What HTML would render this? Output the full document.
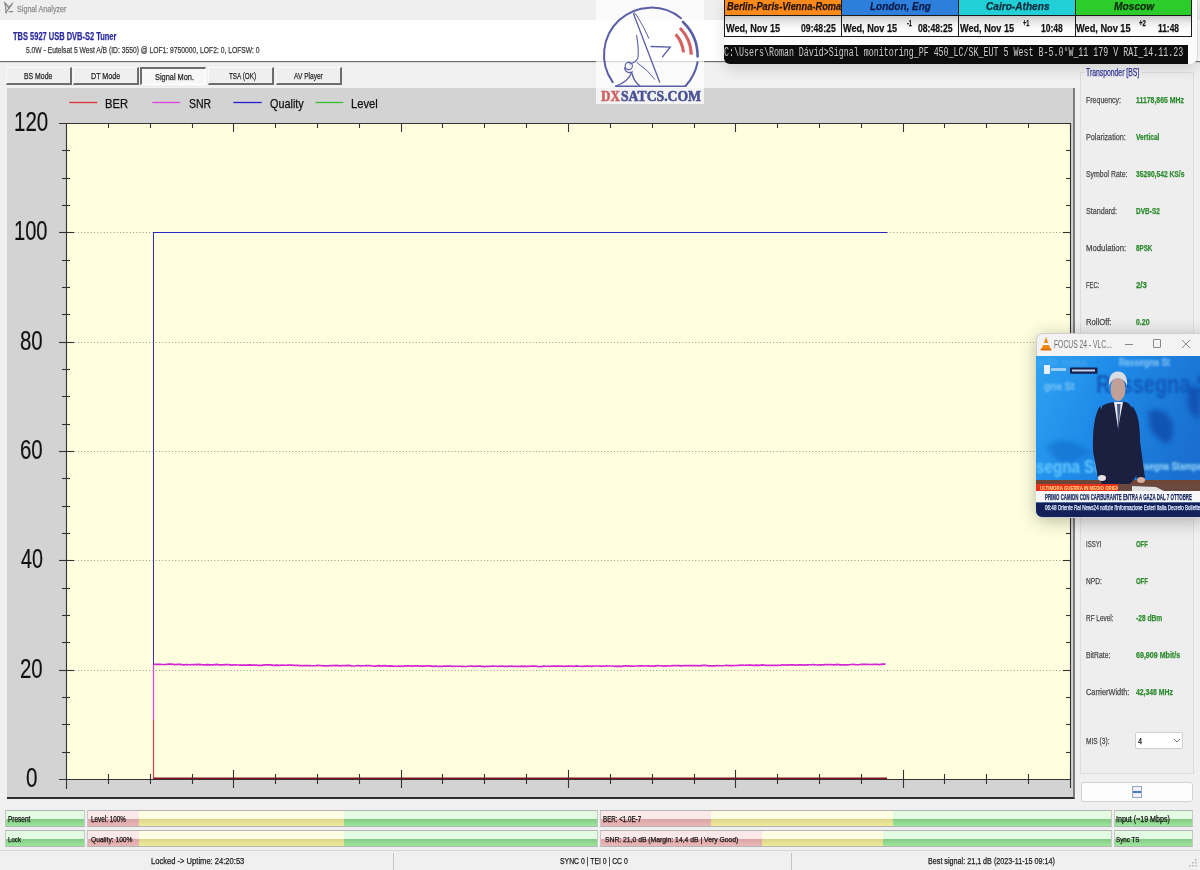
<!DOCTYPE html><html><head><meta charset="utf-8"><style>
*{margin:0;padding:0;box-sizing:border-box}
html,body{width:1200px;height:870px;overflow:hidden;background:#f0f0f0;font-family:"Liberation Sans",sans-serif}
body{position:relative}
.a{position:absolute}
.t{position:absolute;white-space:nowrap;line-height:1;transform-origin:0 0;-webkit-text-stroke:0.25px currentColor}
.btn{position:absolute;top:67px;height:18px;width:66px;background:#efefef;border-right:2px solid #6d6d6d;border-bottom:2px solid #6d6d6d;border-left:1px solid #fafafa;border-top:1px solid #fafafa}
.btn.on{background:#f7f7f7;border-left:2px solid #6d6d6d;border-top:2px solid #6d6d6d;border-right:1px solid #fff;border-bottom:1px solid #fff}
.bar{position:absolute;height:17px;border:1px solid #b4b4b4;border-left-color:#c8c8c8;border-right-color:#c8c8c8;overflow:hidden}
</style></head><body>
<div class="a" style="left:0;top:0;width:1200px;height:20px;background:#efefef"></div>
<svg class="a" style="left:0;top:0" width="16" height="16"><g stroke="#8a8a8a" stroke-width="1.3" fill="none" stroke-linecap="round"><path d="M4.5 2.5 L9.5 8"/><path d="M12.5 3.2 L6 12.5"/><path d="M5.2 3.5 L6.2 13"/><path d="M9.2 11.6 H12.6"/><path d="M8 7 L11.5 5.5"/></g></svg>
<div class="t" style="left:17.30px;top:4.10px;font-family:'Liberation Sans';font-size:9.875px;font-weight:normal;font-style:normal;color:#8a8a8a;transform:scaleX(0.7281);">Signal Analyzer</div>
<div class="a" style="left:0;top:20px;width:1200px;height:41px;background:#fff"></div>
<div class="a" style="left:0;top:61px;width:1200px;height:1px;background:#6e6e6e"></div>
<div class="a" style="left:0;top:62px;width:1200px;height:1px;background:#d8d8d8"></div>
<div class="t" style="left:13.00px;top:31.10px;font-family:'Liberation Sans';font-size:10.750px;font-weight:bold;font-style:normal;color:#2a2a9e;transform:scaleX(0.6963);">TBS 5927 USB DVB-S2 Tuner</div>
<div class="t" style="left:25.50px;top:45.10px;font-family:'Liberation Sans';font-size:9.625px;font-weight:normal;font-style:normal;color:#383838;transform:scaleX(0.7010);">5.0W - Eutelsat 5 West A/B (ID: 3550) @ LOF1: 9750000, LOF2: 0, LOFSW: 0</div>
<div class="btn" style="left:6px"></div>
<div class="t" style="left:24.30px;top:71.10px;font-family:'Liberation Sans';font-size:9.750px;font-weight:normal;font-style:normal;color:#1e1e1e;transform:scaleX(0.7056);">BS Mode</div>
<div class="btn" style="left:73px"></div>
<div class="t" style="left:91.30px;top:71.10px;font-family:'Liberation Sans';font-size:9.750px;font-weight:normal;font-style:normal;color:#1e1e1e;transform:scaleX(0.7310);">DT Mode</div>
<div class="btn on" style="left:140px"></div>
<div class="t" style="left:154.80px;top:72.10px;font-family:'Liberation Sans';font-size:9.625px;font-weight:normal;font-style:normal;color:#1e1e1e;transform:scaleX(0.7688);">Signal Mon.</div>
<div class="btn" style="left:208px"></div>
<div class="t" style="left:229.00px;top:71.10px;font-family:'Liberation Sans';font-size:9.875px;font-weight:normal;font-style:normal;color:#1e1e1e;transform:scaleX(0.6409);">TSA (OK)</div>
<div class="btn" style="left:276px"></div>
<div class="t" style="left:293.90px;top:71.10px;font-family:'Liberation Sans';font-size:9.875px;font-weight:normal;font-style:normal;color:#1e1e1e;transform:scaleX(0.6686);">AV Player</div>
<div class="a" style="left:7px;top:88px;width:1068px;height:711px;background:#d3d3d3;border-right:2px solid #7c7c7c;border-bottom:2px solid #2e2e2e"></div>
<svg class="a" style="left:0;top:0" width="1200" height="870"><rect x="66" y="123" width="1004" height="656" fill="#ffffe0"/><line x1="68" y1="232.5" x2="1068" y2="232.5" stroke="#9a9a8a" stroke-width="1" stroke-dasharray="1 2.25"/><line x1="68" y1="342.5" x2="1068" y2="342.5" stroke="#9a9a8a" stroke-width="1" stroke-dasharray="1 2.25"/><line x1="68" y1="451.5" x2="1068" y2="451.5" stroke="#9a9a8a" stroke-width="1" stroke-dasharray="1 2.25"/><line x1="68" y1="560.5" x2="1068" y2="560.5" stroke="#9a9a8a" stroke-width="1" stroke-dasharray="1 2.25"/><line x1="68" y1="670.5" x2="1068" y2="670.5" stroke="#9a9a8a" stroke-width="1" stroke-dasharray="1 2.25"/><line x1="153.5" y1="232" x2="153.5" y2="665" stroke="#3030c0" stroke-width="1"/><line x1="153.5" y1="232.5" x2="887" y2="232.5" stroke="#2828c8" stroke-width="1"/><line x1="153.5" y1="665" x2="153.5" y2="720" stroke="#e040e0" stroke-width="1.2"/><line x1="153.5" y1="720" x2="153.5" y2="779" stroke="#d04050" stroke-width="1.2"/><polyline points="153.5,664.24 156.5,664.43 159.5,664.34 162.5,664.49 165.5,664.52 168.5,664.20 171.5,664.18 174.5,664.69 177.5,664.36 180.5,664.36 183.5,664.83 186.5,664.53 189.5,664.77 192.5,664.57 195.5,664.69 198.5,664.42 201.5,664.72 204.5,664.88 207.5,664.70 210.5,664.85 213.5,664.83 216.5,664.48 219.5,664.92 222.5,664.84 225.5,664.69 228.5,664.55 231.5,665.07 234.5,664.85 237.5,665.02 240.5,665.14 243.5,665.06 246.5,665.21 249.5,664.92 252.5,665.18 255.5,664.99 258.5,665.31 261.5,665.30 264.5,664.85 267.5,664.89 270.5,664.97 273.5,665.44 276.5,665.14 279.5,665.28 282.5,665.11 285.5,665.25 288.5,665.20 291.5,665.20 294.5,665.36 297.5,665.39 300.5,665.60 303.5,665.49 306.5,665.66 309.5,665.64 312.5,665.74 315.5,665.57 318.5,665.28 321.5,665.72 324.5,665.81 327.5,665.79 330.5,665.61 333.5,665.72 336.5,665.44 339.5,665.83 342.5,665.70 345.5,665.54 348.5,665.43 351.5,665.92 354.5,666.02 357.5,665.50 360.5,665.95 363.5,665.73 366.5,665.59 369.5,665.70 372.5,666.00 375.5,666.08 378.5,665.60 381.5,665.96 384.5,665.63 387.5,666.05 390.5,665.84 393.5,666.18 396.5,666.26 399.5,665.99 402.5,666.30 405.5,665.90 408.5,665.77 411.5,666.10 414.5,665.78 417.5,665.89 420.5,666.03 423.5,666.16 426.5,665.90 429.5,665.84 432.5,666.35 435.5,666.03 438.5,666.43 441.5,666.40 444.5,666.10 447.5,666.16 450.5,666.20 453.5,666.29 456.5,666.27 459.5,666.25 462.5,666.30 465.5,666.50 468.5,666.24 471.5,666.21 474.5,666.39 477.5,666.10 480.5,666.15 483.5,666.56 486.5,666.29 489.5,666.31 492.5,665.99 495.5,666.24 498.5,666.34 501.5,666.00 504.5,666.36 507.5,666.38 510.5,666.03 513.5,666.38 516.5,666.28 519.5,666.41 522.5,666.21 525.5,666.42 528.5,666.44 531.5,666.01 534.5,666.03 537.5,666.40 540.5,666.57 543.5,666.14 546.5,666.26 549.5,666.34 552.5,666.17 555.5,666.19 558.5,666.15 561.5,666.18 564.5,666.31 567.5,666.13 570.5,666.17 573.5,666.40 576.5,665.94 579.5,666.26 582.5,666.35 585.5,666.09 588.5,666.03 591.5,666.37 594.5,666.02 597.5,665.98 600.5,666.12 603.5,666.26 606.5,665.90 609.5,666.02 612.5,666.01 615.5,666.30 618.5,666.05 621.5,666.29 624.5,665.86 627.5,665.95 630.5,666.12 633.5,666.25 636.5,665.98 639.5,665.83 642.5,665.75 645.5,665.98 648.5,665.76 651.5,666.11 654.5,666.11 657.5,665.71 660.5,665.75 663.5,666.05 666.5,665.93 669.5,666.01 672.5,665.72 675.5,665.57 678.5,665.65 681.5,665.93 684.5,665.60 687.5,665.62 690.5,665.65 693.5,665.63 696.5,665.60 699.5,665.89 702.5,665.41 705.5,665.30 708.5,665.84 711.5,665.78 714.5,665.83 717.5,665.48 720.5,665.76 723.5,665.73 726.5,665.28 729.5,665.58 732.5,665.61 735.5,665.48 738.5,665.38 741.5,665.22 744.5,665.23 747.5,665.14 750.5,665.02 753.5,665.31 756.5,665.10 759.5,665.40 762.5,664.91 765.5,665.41 768.5,665.26 771.5,665.38 774.5,665.34 777.5,665.32 780.5,665.10 783.5,664.74 786.5,665.16 789.5,664.79 792.5,664.85 795.5,665.04 798.5,664.94 801.5,664.85 804.5,665.14 807.5,664.92 810.5,664.74 813.5,664.66 816.5,665.01 819.5,664.76 822.5,664.92 825.5,664.64 828.5,664.53 831.5,664.71 834.5,664.86 837.5,664.45 840.5,664.81 843.5,664.87 846.5,664.78 849.5,664.77 852.5,664.26 855.5,664.62 858.5,664.74 861.5,664.24 864.5,664.35 867.5,664.34 870.5,664.48 873.5,664.40 876.5,664.42 879.5,664.59 882.5,664.11 885.5,664.14" fill="none" stroke="#d424d4" stroke-width="1.7"/><line x1="153.5" y1="778.5" x2="887" y2="778.5" stroke="#8a1020" stroke-width="2.2"/><path d="M59 123.5 H1070.5 V779.5 H59 M66.5 123 V789" fill="none" stroke="#333" stroke-width="1.1"/><line x1="62" y1="150.5" x2="70" y2="150.5" stroke="#333" stroke-width="1.1"/><line x1="1066" y1="150.5" x2="1070" y2="150.5" stroke="#333" stroke-width="1.1"/><line x1="62" y1="178.5" x2="70" y2="178.5" stroke="#333" stroke-width="1.1"/><line x1="1066" y1="178.5" x2="1070" y2="178.5" stroke="#333" stroke-width="1.1"/><line x1="62" y1="205.5" x2="70" y2="205.5" stroke="#333" stroke-width="1.1"/><line x1="1066" y1="205.5" x2="1070" y2="205.5" stroke="#333" stroke-width="1.1"/><line x1="59" y1="232.5" x2="74" y2="232.5" stroke="#333" stroke-width="1.1"/><line x1="1063" y1="232.5" x2="1070" y2="232.5" stroke="#333" stroke-width="1.1"/><line x1="62" y1="260.5" x2="70" y2="260.5" stroke="#333" stroke-width="1.1"/><line x1="1066" y1="260.5" x2="1070" y2="260.5" stroke="#333" stroke-width="1.1"/><line x1="62" y1="287.5" x2="70" y2="287.5" stroke="#333" stroke-width="1.1"/><line x1="1066" y1="287.5" x2="1070" y2="287.5" stroke="#333" stroke-width="1.1"/><line x1="62" y1="314.5" x2="70" y2="314.5" stroke="#333" stroke-width="1.1"/><line x1="1066" y1="314.5" x2="1070" y2="314.5" stroke="#333" stroke-width="1.1"/><line x1="59" y1="342.5" x2="74" y2="342.5" stroke="#333" stroke-width="1.1"/><line x1="1063" y1="342.5" x2="1070" y2="342.5" stroke="#333" stroke-width="1.1"/><line x1="62" y1="369.5" x2="70" y2="369.5" stroke="#333" stroke-width="1.1"/><line x1="1066" y1="369.5" x2="1070" y2="369.5" stroke="#333" stroke-width="1.1"/><line x1="62" y1="396.5" x2="70" y2="396.5" stroke="#333" stroke-width="1.1"/><line x1="1066" y1="396.5" x2="1070" y2="396.5" stroke="#333" stroke-width="1.1"/><line x1="62" y1="424.5" x2="70" y2="424.5" stroke="#333" stroke-width="1.1"/><line x1="1066" y1="424.5" x2="1070" y2="424.5" stroke="#333" stroke-width="1.1"/><line x1="59" y1="451.5" x2="74" y2="451.5" stroke="#333" stroke-width="1.1"/><line x1="1063" y1="451.5" x2="1070" y2="451.5" stroke="#333" stroke-width="1.1"/><line x1="62" y1="478.5" x2="70" y2="478.5" stroke="#333" stroke-width="1.1"/><line x1="1066" y1="478.5" x2="1070" y2="478.5" stroke="#333" stroke-width="1.1"/><line x1="62" y1="506.5" x2="70" y2="506.5" stroke="#333" stroke-width="1.1"/><line x1="1066" y1="506.5" x2="1070" y2="506.5" stroke="#333" stroke-width="1.1"/><line x1="62" y1="533.5" x2="70" y2="533.5" stroke="#333" stroke-width="1.1"/><line x1="1066" y1="533.5" x2="1070" y2="533.5" stroke="#333" stroke-width="1.1"/><line x1="59" y1="560.5" x2="74" y2="560.5" stroke="#333" stroke-width="1.1"/><line x1="1063" y1="560.5" x2="1070" y2="560.5" stroke="#333" stroke-width="1.1"/><line x1="62" y1="588.5" x2="70" y2="588.5" stroke="#333" stroke-width="1.1"/><line x1="1066" y1="588.5" x2="1070" y2="588.5" stroke="#333" stroke-width="1.1"/><line x1="62" y1="615.5" x2="70" y2="615.5" stroke="#333" stroke-width="1.1"/><line x1="1066" y1="615.5" x2="1070" y2="615.5" stroke="#333" stroke-width="1.1"/><line x1="62" y1="642.5" x2="70" y2="642.5" stroke="#333" stroke-width="1.1"/><line x1="1066" y1="642.5" x2="1070" y2="642.5" stroke="#333" stroke-width="1.1"/><line x1="59" y1="670.5" x2="74" y2="670.5" stroke="#333" stroke-width="1.1"/><line x1="1063" y1="670.5" x2="1070" y2="670.5" stroke="#333" stroke-width="1.1"/><line x1="62" y1="697.5" x2="70" y2="697.5" stroke="#333" stroke-width="1.1"/><line x1="1066" y1="697.5" x2="1070" y2="697.5" stroke="#333" stroke-width="1.1"/><line x1="62" y1="724.5" x2="70" y2="724.5" stroke="#333" stroke-width="1.1"/><line x1="1066" y1="724.5" x2="1070" y2="724.5" stroke="#333" stroke-width="1.1"/><line x1="62" y1="752.5" x2="70" y2="752.5" stroke="#333" stroke-width="1.1"/><line x1="1066" y1="752.5" x2="1070" y2="752.5" stroke="#333" stroke-width="1.1"/><line x1="108.5" y1="123" x2="108.5" y2="128" stroke="#333" stroke-width="1.1"/><line x1="108.5" y1="774" x2="108.5" y2="784" stroke="#333" stroke-width="1.1"/><line x1="150.5" y1="123" x2="150.5" y2="128" stroke="#333" stroke-width="1.1"/><line x1="150.5" y1="774" x2="150.5" y2="784" stroke="#333" stroke-width="1.1"/><line x1="192.5" y1="123" x2="192.5" y2="128" stroke="#333" stroke-width="1.1"/><line x1="192.5" y1="774" x2="192.5" y2="784" stroke="#333" stroke-width="1.1"/><line x1="233.5" y1="123" x2="233.5" y2="132" stroke="#333" stroke-width="1.1"/><line x1="233.5" y1="770" x2="233.5" y2="788" stroke="#333" stroke-width="1.1"/><line x1="275.5" y1="123" x2="275.5" y2="128" stroke="#333" stroke-width="1.1"/><line x1="275.5" y1="774" x2="275.5" y2="784" stroke="#333" stroke-width="1.1"/><line x1="317.5" y1="123" x2="317.5" y2="128" stroke="#333" stroke-width="1.1"/><line x1="317.5" y1="774" x2="317.5" y2="784" stroke="#333" stroke-width="1.1"/><line x1="359.5" y1="123" x2="359.5" y2="128" stroke="#333" stroke-width="1.1"/><line x1="359.5" y1="774" x2="359.5" y2="784" stroke="#333" stroke-width="1.1"/><line x1="401.5" y1="123" x2="401.5" y2="132" stroke="#333" stroke-width="1.1"/><line x1="401.5" y1="770" x2="401.5" y2="788" stroke="#333" stroke-width="1.1"/><line x1="442.5" y1="123" x2="442.5" y2="128" stroke="#333" stroke-width="1.1"/><line x1="442.5" y1="774" x2="442.5" y2="784" stroke="#333" stroke-width="1.1"/><line x1="484.5" y1="123" x2="484.5" y2="128" stroke="#333" stroke-width="1.1"/><line x1="484.5" y1="774" x2="484.5" y2="784" stroke="#333" stroke-width="1.1"/><line x1="526.5" y1="123" x2="526.5" y2="128" stroke="#333" stroke-width="1.1"/><line x1="526.5" y1="774" x2="526.5" y2="784" stroke="#333" stroke-width="1.1"/><line x1="568.5" y1="123" x2="568.5" y2="132" stroke="#333" stroke-width="1.1"/><line x1="568.5" y1="770" x2="568.5" y2="788" stroke="#333" stroke-width="1.1"/><line x1="610.5" y1="123" x2="610.5" y2="128" stroke="#333" stroke-width="1.1"/><line x1="610.5" y1="774" x2="610.5" y2="784" stroke="#333" stroke-width="1.1"/><line x1="652.5" y1="123" x2="652.5" y2="128" stroke="#333" stroke-width="1.1"/><line x1="652.5" y1="774" x2="652.5" y2="784" stroke="#333" stroke-width="1.1"/><line x1="694.5" y1="123" x2="694.5" y2="128" stroke="#333" stroke-width="1.1"/><line x1="694.5" y1="774" x2="694.5" y2="784" stroke="#333" stroke-width="1.1"/><line x1="735.5" y1="123" x2="735.5" y2="132" stroke="#333" stroke-width="1.1"/><line x1="735.5" y1="770" x2="735.5" y2="788" stroke="#333" stroke-width="1.1"/><line x1="777.5" y1="123" x2="777.5" y2="128" stroke="#333" stroke-width="1.1"/><line x1="777.5" y1="774" x2="777.5" y2="784" stroke="#333" stroke-width="1.1"/><line x1="819.5" y1="123" x2="819.5" y2="128" stroke="#333" stroke-width="1.1"/><line x1="819.5" y1="774" x2="819.5" y2="784" stroke="#333" stroke-width="1.1"/><line x1="861.5" y1="123" x2="861.5" y2="128" stroke="#333" stroke-width="1.1"/><line x1="861.5" y1="774" x2="861.5" y2="784" stroke="#333" stroke-width="1.1"/><line x1="903.5" y1="123" x2="903.5" y2="132" stroke="#333" stroke-width="1.1"/><line x1="903.5" y1="770" x2="903.5" y2="788" stroke="#333" stroke-width="1.1"/><line x1="944.5" y1="123" x2="944.5" y2="128" stroke="#333" stroke-width="1.1"/><line x1="944.5" y1="774" x2="944.5" y2="784" stroke="#333" stroke-width="1.1"/><line x1="986.5" y1="123" x2="986.5" y2="128" stroke="#333" stroke-width="1.1"/><line x1="986.5" y1="774" x2="986.5" y2="784" stroke="#333" stroke-width="1.1"/><line x1="1028.5" y1="123" x2="1028.5" y2="128" stroke="#333" stroke-width="1.1"/><line x1="1028.5" y1="774" x2="1028.5" y2="784" stroke="#333" stroke-width="1.1"/><line x1="1070.5" y1="123" x2="1070.5" y2="132" stroke="#333" stroke-width="1.1"/><line x1="1070.5" y1="770" x2="1070.5" y2="788" stroke="#333" stroke-width="1.1"/><line x1="69.3" y1="102.5" x2="97.3" y2="102.5" stroke="#e03030" stroke-width="1.3"/><line x1="152.3" y1="102.5" x2="180" y2="102.5" stroke="#e040e0" stroke-width="1.3"/><line x1="233.3" y1="102.5" x2="261.7" y2="102.5" stroke="#2020d0" stroke-width="1.3"/><line x1="315.7" y1="102.5" x2="343.3" y2="102.5" stroke="#30c030" stroke-width="1.3"/></svg>
<div class="t" style="left:105.41px;top:97.10px;font-family:'Liberation Sans';font-size:13.375px;font-weight:normal;font-style:normal;color:#111;transform:scaleX(0.8389);">BER</div>
<div class="t" style="left:188.75px;top:97.10px;font-family:'Liberation Sans';font-size:13.375px;font-weight:normal;font-style:normal;color:#111;transform:scaleX(0.7879);">SNR</div>
<div class="t" style="left:270.00px;top:97.10px;font-family:'Liberation Sans';font-size:13.375px;font-weight:normal;font-style:normal;color:#111;transform:scaleX(0.8115);">Quality</div>
<div class="t" style="left:351.46px;top:97.10px;font-family:'Liberation Sans';font-size:13.375px;font-weight:normal;font-style:normal;color:#111;transform:scaleX(0.8395);">Level</div>
<div class="t" style="left:14.07px;top:109.10px;font-family:'Liberation Sans';font-size:26.750px;font-weight:normal;font-style:normal;color:#111;transform:scaleX(0.7664);-webkit-text-stroke:0.2px #111;">120</div>
<div class="t" style="left:14.45px;top:218.10px;font-family:'Liberation Sans';font-size:26.750px;font-weight:normal;font-style:normal;color:#111;transform:scaleX(0.7496);-webkit-text-stroke:0.2px #111;">100</div>
<div class="t" style="left:20.19px;top:328.10px;font-family:'Liberation Sans';font-size:26.750px;font-weight:normal;font-style:normal;color:#111;transform:scaleX(0.7641);-webkit-text-stroke:0.2px #111;">80</div>
<div class="t" style="left:20.19px;top:437.10px;font-family:'Liberation Sans';font-size:26.750px;font-weight:normal;font-style:normal;color:#111;transform:scaleX(0.7641);-webkit-text-stroke:0.2px #111;">60</div>
<div class="t" style="left:20.95px;top:546.10px;font-family:'Liberation Sans';font-size:26.750px;font-weight:normal;font-style:normal;color:#111;transform:scaleX(0.7376);-webkit-text-stroke:0.2px #111;">40</div>
<div class="t" style="left:20.21px;top:656.10px;font-family:'Liberation Sans';font-size:26.750px;font-weight:normal;font-style:normal;color:#111;transform:scaleX(0.7623);-webkit-text-stroke:0.2px #111;">20</div>
<div class="t" style="left:25.83px;top:765.10px;font-family:'Liberation Sans';font-size:26.750px;font-weight:normal;font-style:normal;color:#111;transform:scaleX(0.7692);-webkit-text-stroke:0.2px #111;">0</div>
<div class="a" style="left:1080px;top:72px;width:114px;height:702px;border:1px solid #dedede;background:#eeeeee"></div>
<div class="a" style="left:1084px;top:67px;width:58px;height:12px;background:#efefef"></div>
<div class="t" style="left:1086.30px;top:68.10px;font-family:'Liberation Sans';font-size:10.125px;font-weight:normal;font-style:normal;color:#34349a;transform:scaleX(0.6743);">Transponder [BS]</div>
<div class="t" style="left:1086.30px;top:96.10px;font-family:'Liberation Sans';font-size:9.000px;font-weight:normal;font-style:normal;color:#4a4a4a;transform:scaleX(0.7772);">Frequency:</div>
<div class="t" style="left:1135.80px;top:96.10px;font-family:'Liberation Sans';font-size:8.875px;font-weight:bold;font-style:normal;color:#2e8b2e;transform:scaleX(0.7789);">11178,865 MHz</div>
<div class="t" style="left:1086.30px;top:133.10px;font-family:'Liberation Sans';font-size:9.000px;font-weight:normal;font-style:normal;color:#4a4a4a;transform:scaleX(0.8037);">Polarization:</div>
<div class="t" style="left:1135.80px;top:133.10px;font-family:'Liberation Sans';font-size:8.875px;font-weight:bold;font-style:normal;color:#2e8b2e;transform:scaleX(0.7437);">Vertical</div>
<div class="t" style="left:1086.30px;top:170.10px;font-family:'Liberation Sans';font-size:9.000px;font-weight:normal;font-style:normal;color:#4a4a4a;transform:scaleX(0.7679);">Symbol Rate:</div>
<div class="t" style="left:1135.80px;top:170.10px;font-family:'Liberation Sans';font-size:8.875px;font-weight:bold;font-style:normal;color:#2e8b2e;transform:scaleX(0.7550);">35290,542 KS/s</div>
<div class="t" style="left:1086.30px;top:207.10px;font-family:'Liberation Sans';font-size:9.000px;font-weight:normal;font-style:normal;color:#4a4a4a;transform:scaleX(0.7968);">Standard:</div>
<div class="t" style="left:1135.80px;top:207.10px;font-family:'Liberation Sans';font-size:8.875px;font-weight:bold;font-style:normal;color:#2e8b2e;transform:scaleX(0.7339);">DVB-S2</div>
<div class="t" style="left:1086.30px;top:244.10px;font-family:'Liberation Sans';font-size:9.000px;font-weight:normal;font-style:normal;color:#4a4a4a;transform:scaleX(0.8625);">Modulation:</div>
<div class="t" style="left:1135.80px;top:244.10px;font-family:'Liberation Sans';font-size:8.875px;font-weight:bold;font-style:normal;color:#2e8b2e;transform:scaleX(0.7075);">8PSK</div>
<div class="t" style="left:1086.30px;top:281.10px;font-family:'Liberation Sans';font-size:9.000px;font-weight:normal;font-style:normal;color:#4a4a4a;transform:scaleX(0.6550);">FEC:</div>
<div class="t" style="left:1135.80px;top:281.10px;font-family:'Liberation Sans';font-size:8.875px;font-weight:bold;font-style:normal;color:#2e8b2e;transform:scaleX(0.8879);">2/3</div>
<div class="t" style="left:1086.30px;top:318.10px;font-family:'Liberation Sans';font-size:9.000px;font-weight:normal;font-style:normal;color:#4a4a4a;transform:scaleX(0.8520);">RollOff:</div>
<div class="t" style="left:1135.80px;top:318.10px;font-family:'Liberation Sans';font-size:8.875px;font-weight:bold;font-style:normal;color:#2e8b2e;transform:scaleX(0.7854);">0.20</div>
<div class="t" style="left:1086.30px;top:355.10px;font-family:'Liberation Sans';font-size:9.000px;font-weight:normal;font-style:normal;color:#4a4a4a;transform:scaleX(0.8048);">Pilot:</div>
<div class="t" style="left:1135.80px;top:355.10px;font-family:'Liberation Sans';font-size:8.875px;font-weight:bold;font-style:normal;color:#2e8b2e;transform:scaleX(0.9464);">ON</div>
<div class="t" style="left:1086.30px;top:392.10px;font-family:'Liberation Sans';font-size:9.000px;font-weight:normal;font-style:normal;color:#4a4a4a;transform:scaleX(0.7392);">Frame:</div>
<div class="t" style="left:1135.80px;top:392.10px;font-family:'Liberation Sans';font-size:8.875px;font-weight:bold;font-style:normal;color:#2e8b2e;transform:scaleX(0.8050);">Normal</div>
<div class="t" style="left:1086.30px;top:429.10px;font-family:'Liberation Sans';font-size:9.000px;font-weight:normal;font-style:normal;color:#4a4a4a;transform:scaleX(0.7472);">Gold:</div>
<div class="t" style="left:1135.80px;top:429.10px;font-family:'Liberation Sans';font-size:8.875px;font-weight:bold;font-style:normal;color:#2e8b2e;transform:scaleX(1.0400);">0</div>
<div class="t" style="left:1086.30px;top:466.10px;font-family:'Liberation Sans';font-size:9.000px;font-weight:normal;font-style:normal;color:#4a4a4a;transform:scaleX(0.7206);">PLS:</div>
<div class="t" style="left:1135.80px;top:466.10px;font-family:'Liberation Sans';font-size:8.875px;font-weight:bold;font-style:normal;color:#2e8b2e;transform:scaleX(0.8011);">Root</div>
<div class="t" style="left:1086.30px;top:503.10px;font-family:'Liberation Sans';font-size:9.000px;font-weight:normal;font-style:normal;color:#4a4a4a;transform:scaleX(0.7422);">TSID:</div>
<div class="t" style="left:1135.80px;top:503.10px;font-family:'Liberation Sans';font-size:8.875px;font-weight:bold;font-style:normal;color:#2e8b2e;transform:scaleX(0.8400);">1</div>
<div class="t" style="left:1086.30px;top:540.10px;font-family:'Liberation Sans';font-size:9.000px;font-weight:normal;font-style:normal;color:#4a4a4a;transform:scaleX(0.6708);">ISSYI</div>
<div class="t" style="left:1135.80px;top:540.10px;font-family:'Liberation Sans';font-size:8.875px;font-weight:bold;font-style:normal;color:#2e8b2e;transform:scaleX(0.6666);">OFF</div>
<div class="t" style="left:1086.30px;top:577.10px;font-family:'Liberation Sans';font-size:9.000px;font-weight:normal;font-style:normal;color:#4a4a4a;transform:scaleX(0.7333);">NPD:</div>
<div class="t" style="left:1135.80px;top:577.10px;font-family:'Liberation Sans';font-size:8.875px;font-weight:bold;font-style:normal;color:#2e8b2e;transform:scaleX(0.6666);">OFF</div>
<div class="t" style="left:1086.30px;top:614.10px;font-family:'Liberation Sans';font-size:9.000px;font-weight:normal;font-style:normal;color:#4a4a4a;transform:scaleX(0.7129);">RF Level:</div>
<div class="t" style="left:1135.80px;top:614.10px;font-family:'Liberation Sans';font-size:8.875px;font-weight:bold;font-style:normal;color:#2e8b2e;transform:scaleX(0.7470);">-28 dBm</div>
<div class="t" style="left:1086.30px;top:651.10px;font-family:'Liberation Sans';font-size:9.000px;font-weight:normal;font-style:normal;color:#4a4a4a;transform:scaleX(0.7616);">BitRate:</div>
<div class="t" style="left:1135.80px;top:651.10px;font-family:'Liberation Sans';font-size:8.875px;font-weight:bold;font-style:normal;color:#2e8b2e;transform:scaleX(0.8004);">69,909 Mbit/s</div>
<div class="t" style="left:1086.30px;top:688.10px;font-family:'Liberation Sans';font-size:9.000px;font-weight:normal;font-style:normal;color:#4a4a4a;transform:scaleX(0.8189);">CarrierWidth:</div>
<div class="t" style="left:1135.80px;top:688.10px;font-family:'Liberation Sans';font-size:8.875px;font-weight:bold;font-style:normal;color:#2e8b2e;transform:scaleX(0.7717);">42,348 MHz</div>
<div class="t" style="left:1086.30px;top:737.10px;font-family:'Liberation Sans';font-size:9.375px;font-weight:normal;font-style:normal;color:#4a4a4a;transform:scaleX(0.7038);">MIS (3):</div>
<div class="a" style="left:1135px;top:732px;width:48px;height:17px;background:#fff;border:1px solid #cfcfcf;border-radius:2px"></div>
<div class="t" style="left:1137.60px;top:737.10px;font-family:'Liberation Sans';font-size:9.375px;font-weight:normal;font-style:normal;color:#111;transform:scaleX(0.7800);">4</div>
<svg class="a" style="left:1173px;top:738px" width="8" height="6"><path d="M1 1 L4 4 L7 1" stroke="#777" fill="none"/></svg>
<div class="a" style="left:1081px;top:782px;width:112px;height:20px;background:#fdfdfd;border:1px solid #d2d2d2;border-radius:3px"></div>
<svg class="a" style="left:1131px;top:785px" width="13" height="14"><rect x="1.5" y="1.5" width="9" height="11" fill="#f0f0ff" stroke="#9ab"/><rect x="2" y="6" width="8" height="2" fill="#4a78c0"/></svg>
<div class="bar" style="left:5px;top:810px;width:80px"><div class="a" style="left:0px;top:0;width:80px;height:8px;background:#e3fbe3"></div><div class="a" style="left:0px;top:8px;width:80px;height:7px;background:linear-gradient(#84c884,#9ce89c)"></div></div>
<div class="bar" style="left:5px;top:830px;width:80px"><div class="a" style="left:0px;top:0;width:80px;height:8px;background:#e3fbe3"></div><div class="a" style="left:0px;top:8px;width:80px;height:7px;background:linear-gradient(#84c884,#9ce89c)"></div></div>
<div class="bar" style="left:87px;top:810px;width:511px"><div class="a" style="left:0px;top:0;width:51px;height:8px;background:#fbe8e8"></div><div class="a" style="left:0px;top:8px;width:51px;height:7px;background:linear-gradient(#dca4a4,#eab8b8)"></div><div class="a" style="left:51px;top:0;width:205px;height:8px;background:#fefee2"></div><div class="a" style="left:51px;top:8px;width:205px;height:7px;background:linear-gradient(#dcd48c,#f0ec98)"></div><div class="a" style="left:256px;top:0;width:255px;height:8px;background:#e3fbe3"></div><div class="a" style="left:256px;top:8px;width:255px;height:7px;background:linear-gradient(#84c884,#9ce89c)"></div></div>
<div class="bar" style="left:87px;top:830px;width:511px"><div class="a" style="left:0px;top:0;width:51px;height:8px;background:#fbe8e8"></div><div class="a" style="left:0px;top:8px;width:51px;height:7px;background:linear-gradient(#dca4a4,#eab8b8)"></div><div class="a" style="left:51px;top:0;width:205px;height:8px;background:#fefee2"></div><div class="a" style="left:51px;top:8px;width:205px;height:7px;background:linear-gradient(#dcd48c,#f0ec98)"></div><div class="a" style="left:256px;top:0;width:255px;height:8px;background:#e3fbe3"></div><div class="a" style="left:256px;top:8px;width:255px;height:7px;background:linear-gradient(#84c884,#9ce89c)"></div></div>
<div class="bar" style="left:600px;top:810px;width:512px"><div class="a" style="left:0px;top:0;width:110px;height:8px;background:#fbe8e8"></div><div class="a" style="left:0px;top:8px;width:110px;height:7px;background:linear-gradient(#dca4a4,#eab8b8)"></div><div class="a" style="left:110px;top:0;width:182px;height:8px;background:#fefee2"></div><div class="a" style="left:110px;top:8px;width:182px;height:7px;background:linear-gradient(#dcd48c,#f0ec98)"></div><div class="a" style="left:292px;top:0;width:220px;height:8px;background:#e3fbe3"></div><div class="a" style="left:292px;top:8px;width:220px;height:7px;background:linear-gradient(#84c884,#9ce89c)"></div></div>
<div class="bar" style="left:600px;top:830px;width:512px"><div class="a" style="left:0px;top:0;width:161px;height:8px;background:#fbe8e8"></div><div class="a" style="left:0px;top:8px;width:161px;height:7px;background:linear-gradient(#dca4a4,#eab8b8)"></div><div class="a" style="left:161px;top:0;width:121px;height:8px;background:#fefee2"></div><div class="a" style="left:161px;top:8px;width:121px;height:7px;background:linear-gradient(#dcd48c,#f0ec98)"></div><div class="a" style="left:282px;top:0;width:230px;height:8px;background:#e3fbe3"></div><div class="a" style="left:282px;top:8px;width:230px;height:7px;background:linear-gradient(#84c884,#9ce89c)"></div></div>
<div class="bar" style="left:1114px;top:810px;width:79px"><div class="a" style="left:0px;top:0;width:79px;height:8px;background:#e3fbe3"></div><div class="a" style="left:0px;top:8px;width:79px;height:7px;background:linear-gradient(#84c884,#9ce89c)"></div></div>
<div class="bar" style="left:1114px;top:830px;width:79px"><div class="a" style="left:0px;top:0;width:79px;height:8px;background:#e3fbe3"></div><div class="a" style="left:0px;top:8px;width:79px;height:7px;background:linear-gradient(#84c884,#9ce89c)"></div></div>
<div class="t" style="left:7.60px;top:815.10px;font-family:'Liberation Sans';font-size:8.375px;font-weight:normal;font-style:normal;color:#141414;transform:scaleX(0.7732);">Present</div>
<div class="t" style="left:7.60px;top:836.10px;font-family:'Liberation Sans';font-size:8.125px;font-weight:normal;font-style:normal;color:#141414;transform:scaleX(0.7580);">Lock</div>
<div class="t" style="left:90.70px;top:815.10px;font-family:'Liberation Sans';font-size:8.375px;font-weight:normal;font-style:normal;color:#141414;transform:scaleX(0.7579);">Level: 100%</div>
<div class="t" style="left:90.70px;top:836.10px;font-family:'Liberation Sans';font-size:8.125px;font-weight:normal;font-style:normal;color:#141414;transform:scaleX(0.8215);">Quality: 100%</div>
<div class="t" style="left:602.90px;top:815.10px;font-family:'Liberation Sans';font-size:8.375px;font-weight:normal;font-style:normal;color:#141414;transform:scaleX(0.7428);">BER: &lt;1.0E-7</div>
<div class="t" style="left:604.70px;top:836.10px;font-family:'Liberation Sans';font-size:8.125px;font-weight:normal;font-style:normal;color:#141414;transform:scaleX(0.8365);">SNR: 21,0 dB (Margin: 14,4 dB | Very Good)</div>
<div class="t" style="left:1116.00px;top:815.10px;font-family:'Liberation Sans';font-size:8.375px;font-weight:normal;font-style:normal;color:#141414;transform:scaleX(0.8485);">Input (~19 Mbps)</div>
<div class="t" style="left:1116.00px;top:836.10px;font-family:'Liberation Sans';font-size:8.125px;font-weight:normal;font-style:normal;color:#141414;transform:scaleX(0.7684);">Sync TS</div>
<div class="a" style="left:0;top:850px;width:1200px;height:1px;background:#d6d6d6"></div>
<div class="a" style="left:393px;top:853px;width:1px;height:17px;background:#c4c4c4"></div>
<div class="a" style="left:791px;top:853px;width:1px;height:17px;background:#c4c4c4"></div>
<div class="t" style="left:151.00px;top:856.10px;font-family:'Liberation Sans';font-size:9.750px;font-weight:normal;font-style:normal;color:#1a1a1a;transform:scaleX(0.7774);">Locked -&gt; Uptime: 24:20:53</div>
<div class="t" style="left:560.00px;top:856.10px;font-family:'Liberation Sans';font-size:9.750px;font-weight:normal;font-style:normal;color:#1a1a1a;transform:scaleX(0.7026);">SYNC 0 | TEI 0 | CC 0</div>
<div class="t" style="left:928.30px;top:856.10px;font-family:'Liberation Sans';font-size:9.750px;font-weight:normal;font-style:normal;color:#1a1a1a;transform:scaleX(0.7369);">Best signal: 21,1 dB (2023-11-15 09:14)</div>
<svg class="a" style="left:1188px;top:858px" width="10" height="10"><g fill="#b0b0b0"><rect x="7" y="1" width="1.5" height="1.5"/><rect x="4" y="4" width="1.5" height="1.5"/><rect x="7" y="4" width="1.5" height="1.5"/><rect x="1" y="7" width="1.5" height="1.5"/><rect x="4" y="7" width="1.5" height="1.5"/><rect x="7" y="7" width="1.5" height="1.5"/></g></svg>
<div class="a" style="left:596px;top:0;width:108px;height:104px;background:rgba(255,255,255,.72)"></div>
<svg class="a" style="left:0;top:0" width="720" height="110">
<g fill="none" stroke="#5a5ea6" stroke-linecap="round">
<path d="M681 18.2 A47.2 47.2 0 0 0 612.7 82.1" stroke-width="2"/>
<path d="M683 22 A47.2 47.2 0 0 1 697.6 56.5" stroke-width="2.6"/>
<path d="M697.6 62 A47.2 47.2 0 0 1 685.5 86" stroke-width="2"/>
<path d="M615.5 86.2 H685.5" stroke-width="1.6"/>
<path d="M633.7 14.3 L659.6 82.1" stroke-width="1.3"/>
<path d="M633.7 14.3 Q633 10 637 16 Q644 27 648.8 38.2" stroke-width="1"/>
<path d="M637 62.6 Q648 70 654.7 79.2" stroke-width="1"/>
<path d="M651 46.5 L670.3 47 L662.5 56.8" stroke-width="1.3"/>
<path d="M636.6 35.3 Q639 50 638 57.7 Q636 62 630 64" stroke-width="1.1"/>
<path d="M624.5 68 Q626 74 632 72 Q628 82 616 86" stroke-width="1.3"/>
<path d="M632 73.4 Q634 82 640 86" stroke-width="1.4"/>
<circle cx="628.8" cy="66" r="3.6" stroke-width="1.1"/>
</g>
<g fill="none" stroke="#d46262" stroke-width="3.2">
<path d="M680 28 A39.5 39.5 0 0 1 691.3 54.8"/>
<path d="M675.7 34.3 A32.5 32.5 0 0 1 683.5 52.4"/>
</g>
</svg>
<div class="t" style="left:600.50px;top:89.10px;font-family:'Liberation Serif';font-size:14.750px;font-weight:bold;font-style:normal;color:#cc6262;transform:scaleX(0.8868);-webkit-text-stroke:0.6px currentColor;">DX</div>
<div class="t" style="left:621.20px;top:89.10px;font-family:'Liberation Serif';font-size:14.750px;font-weight:bold;font-style:normal;color:#4c5294;transform:scaleX(0.9285);-webkit-text-stroke:0.6px currentColor;">SATCS.COM</div>
<div class="a" style="left:724px;top:0;width:474px;height:64px;background:#fbfbfb;border-right:1px solid #d8d8d8;border-radius:0 0 8px 8px;box-shadow:0 5px 14px rgba(0,0,0,.13)"></div>
<div class="a" style="left:724px;top:0;width:117px;height:15.6px;background:#ff8a1c;border-bottom:1.5px solid #1a1a1a"></div>
<div class="a" style="left:724px;top:15.6px;width:117px;height:21.4px;background:linear-gradient(#c8c8c8,#e8e8e8 30%,#fafafa 60%,#fff);border-bottom:1.5px solid #1a1a1a"></div>
<div class="a" style="left:841px;top:0;width:117px;height:15.6px;background:#2e7fdc;border-bottom:1.5px solid #1a1a1a"></div>
<div class="a" style="left:841px;top:15.6px;width:117px;height:21.4px;background:linear-gradient(#c8c8c8,#e8e8e8 30%,#fafafa 60%,#fff);border-bottom:1.5px solid #1a1a1a"></div>
<div class="a" style="left:958px;top:0;width:117px;height:15.6px;background:#22cfd6;border-bottom:1.5px solid #1a1a1a"></div>
<div class="a" style="left:958px;top:15.6px;width:117px;height:21.4px;background:linear-gradient(#c8c8c8,#e8e8e8 30%,#fafafa 60%,#fff);border-bottom:1.5px solid #1a1a1a"></div>
<div class="a" style="left:1075px;top:0;width:117px;height:15.6px;background:#2ccc2c;border-bottom:1.5px solid #1a1a1a"></div>
<div class="a" style="left:1075px;top:15.6px;width:117px;height:21.4px;background:linear-gradient(#c8c8c8,#e8e8e8 30%,#fafafa 60%,#fff);border-bottom:1.5px solid #1a1a1a"></div>
<div class="a" style="left:724px;top:0;width:1px;height:37px;background:#1a1a1a"></div>
<div class="a" style="left:841px;top:0;width:1px;height:37px;background:#1a1a1a"></div>
<div class="a" style="left:958px;top:0;width:1px;height:37px;background:#1a1a1a"></div>
<div class="a" style="left:1075px;top:0;width:1px;height:37px;background:#1a1a1a"></div>
<div class="a" style="left:1191px;top:0;width:1px;height:37px;background:#1a1a1a"></div>
<div class="t" style="left:726.50px;top:1.10px;font-family:'Liberation Sans';font-size:11.375px;font-weight:bold;font-style:italic;color:#1a1208;transform:scaleX(0.8178);">Berlin-Paris-Vienna-Roma</div>
<div class="t" style="left:870.00px;top:1.10px;font-family:'Liberation Sans';font-size:11.375px;font-weight:bold;font-style:italic;color:#0c1a48;transform:scaleX(0.8782);">London, Eng</div>
<div class="t" style="left:985.75px;top:1.10px;font-family:'Liberation Sans';font-size:11.375px;font-weight:bold;font-style:italic;color:#0a2838;transform:scaleX(0.8908);">Cairo-Athens</div>
<div class="t" style="left:1113.75px;top:1.10px;font-family:'Liberation Sans';font-size:11.375px;font-weight:bold;font-style:italic;color:#0a2a0a;transform:scaleX(0.8972);">Moscow</div>
<div class="t" style="left:726.00px;top:22.10px;font-family:'Liberation Sans';font-size:11.625px;font-weight:bold;font-style:normal;color:#111;transform:scaleX(0.7857);">Wed, Nov 15</div>
<div class="t" style="left:800.70px;top:22.10px;font-family:'Liberation Sans';font-size:11.625px;font-weight:bold;font-style:normal;color:#111;transform:scaleX(0.7466);">09:48:25</div>
<div class="t" style="left:842.50px;top:22.10px;font-family:'Liberation Sans';font-size:11.625px;font-weight:bold;font-style:normal;color:#111;transform:scaleX(0.7857);">Wed, Nov 15</div>
<div class="t" style="left:917.50px;top:22.10px;font-family:'Liberation Sans';font-size:11.625px;font-weight:bold;font-style:normal;color:#111;transform:scaleX(0.7444);">08:48:25</div>
<div class="t" style="left:906.90px;top:19.10px;font-family:'Liberation Sans';font-size:8.750px;font-weight:bold;font-style:normal;color:#111;transform:scaleX(0.6318);">-1</div>
<div class="t" style="left:959.50px;top:22.10px;font-family:'Liberation Sans';font-size:11.625px;font-weight:bold;font-style:normal;color:#111;transform:scaleX(0.7857);">Wed, Nov 15</div>
<div class="t" style="left:1041.00px;top:22.10px;font-family:'Liberation Sans';font-size:11.625px;font-weight:bold;font-style:normal;color:#111;transform:scaleX(0.7342);">10:48</div>
<div class="t" style="left:1022.60px;top:19.10px;font-family:'Liberation Sans';font-size:8.750px;font-weight:bold;font-style:normal;color:#111;transform:scaleX(0.6330);">+1</div>
<div class="t" style="left:1075.60px;top:22.10px;font-family:'Liberation Sans';font-size:11.625px;font-weight:bold;font-style:normal;color:#111;transform:scaleX(0.7930);">Wed, Nov 15</div>
<div class="t" style="left:1158.00px;top:22.10px;font-family:'Liberation Sans';font-size:11.625px;font-weight:bold;font-style:normal;color:#111;transform:scaleX(0.7231);">11:48</div>
<div class="t" style="left:1139.00px;top:19.10px;font-family:'Liberation Sans';font-size:8.750px;font-weight:bold;font-style:normal;color:#111;transform:scaleX(0.6924);">+2</div>
<div class="a" style="left:724px;top:45px;width:464px;height:19px;background:#0c0c0c;border-radius:0 0 0 6px"></div>
<div class="t" style="left:724.20px;top:47.10px;font-family:'Liberation Mono';font-size:12.625px;font-weight:normal;font-style:normal;color:#cccccc;transform:scaleX(0.6596);-webkit-text-stroke:0;">C:\Users\Roman Dávid&gt;Signal monitoring_PF 450_LC/SK_EUT 5 West B-5.0°W_11 179 V RAI_14.11.23</div>
<div class="a" style="left:1036px;top:333px;width:170px;height:185px;background:#f3f3f3;border:1px solid #cfcfcf;border-radius:7px 0 0 7px;overflow:hidden;box-shadow:0 3px 18px rgba(0,0,0,.28)"></div>
<svg class="a" style="left:1040px;top:336px" width="12" height="15" viewBox="0 0 12 15"><path d="M6 1 L10.5 13 H1.5 Z" fill="#f08a10"/><path d="M3.6 7 H8.4 L9.1 9 H2.9Z" fill="#fff"/><rect x="0.5" y="12.5" width="11" height="2" rx="1" fill="#e07000"/></svg>
<div class="t" style="left:1054.00px;top:339.10px;font-family:'Liberation Sans';font-size:11.250px;font-weight:normal;font-style:normal;color:#6e6e6e;transform:scaleX(0.6001);-webkit-text-stroke:0;">FOCUS 24 - VLC...</div>
<div class="a" style="left:1125px;top:344px;width:8px;height:1px;background:#888"></div>
<div class="a" style="left:1153px;top:339px;width:8px;height:9px;border:1px solid #888;border-radius:1px"></div>
<svg class="a" style="left:1181px;top:339px" width="10" height="10"><path d="M1 1 L9 9 M9 1 L1 9" stroke="#888" stroke-width="1"/></svg>
<svg class="a" style="left:1036px;top:356px" width="164" height="161" viewBox="0 0 164 161">
<defs>
<linearGradient id="vbg" x1="0" y1="0" x2="1" y2="0.4"><stop offset="0" stop-color="#2ea2f2"/><stop offset="0.45" stop-color="#1e8ae8"/><stop offset="1" stop-color="#1a70d0"/></linearGradient>
<filter id="bl1"><feGaussianBlur stdDeviation="0.8"/></filter>
<filter id="bl2"><feGaussianBlur stdDeviation="2.5"/></filter>
<clipPath id="vc"><path d="M0 0 H164 V161 H7 Q0 161 0 154 Z"/></clipPath>
</defs>
<g clip-path="url(#vc)">
<rect x="0" y="0" width="164" height="161" fill="url(#vbg)"/>
<g filter="url(#bl2)" fill="#0f4aa8" opacity=".75">
<path d="M152 30 Q164 28 164 40 L164 62 Q156 62 152 50Z"/>
<path d="M112 55 Q128 50 136 65 Q140 80 132 88 Q120 84 114 72Z"/>
<path d="M60 100 Q50 95 40 104 Q30 110 20 104 L10 90 Q25 80 40 88Z" opacity=".4"/>
</g>
<g font-family="Liberation Sans" font-weight="bold" filter="url(#bl1)">
<text x="60" y="37" font-size="25" fill="#0e54b4" opacity=".85" transform="scale(.8 1)" transform-origin="60 37">Rassegna St</text>
<text x="83" y="10" font-size="10" fill="#9cd4fa" opacity=".85" transform="scale(.85 1)" transform-origin="83 10">Rassegna St</text>
<text x="2" y="10" font-size="11" fill="#60b0f0" opacity=".5">a St mma</text>
<text x="8" y="34" font-size="10" fill="#8ccef8" opacity=".85">gna St</text>
<text x="0" y="117" font-size="19" fill="#66ccff" opacity=".95" transform="scale(.8 1)" transform-origin="0 117">segna St</text>
<text x="93" y="114" font-size="10" fill="#a0e0ff" opacity=".95" transform="scale(.85 1)" transform-origin="93 114">Rassegna Stampa</text>
</g>
<rect x="8" y="9" width="6" height="9" fill="#e8f0ff"/><rect x="15" y="12" width="15" height="3" fill="#cfe4ff" opacity=".7"/>
<rect x="34" y="11.5" width="27.5" height="6.3" rx="1" fill="#132050"/><rect x="36" y="13.5" width="23" height="2" fill="#c8d0e8"/>
<rect x="0" y="124" width="164" height="7" fill="#6e4636"/>
<path d="M66 50 Q74 45 90 46 Q99 50 100 70 L101 118 Q96 130 86 131 L68 131 Q62 124 62 110 Z" fill="#1c2040"/>
<path d="M78 46 L82 72 L87 46Z" fill="#e8e8f0"/><path d="M81 48 L82.5 76 L84.5 48Z" fill="#4a5a88"/>
<ellipse cx="82" cy="33" rx="7.5" ry="12" fill="#c0a098"/>
<path d="M73 30 Q72 16 82 15.5 Q92 16 91 30 Q88 22 82 22 Q76 22 73 30Z" fill="#d8dce4"/>
<path d="M64 50 Q56 62 57 95 L62 122 L71 118 Q66 85 70 62Z" fill="#1c2040"/>
<path d="M96 50 Q104 58 104 85 L109 122 L101 124 Q96 100 94 80Z" fill="#1c2040"/>
<ellipse cx="66" cy="122" rx="4" ry="3" fill="#e8e0e0"/><ellipse cx="105" cy="124" rx="4" ry="3" fill="#d8b0a0"/>
<rect x="0" y="128" width="82" height="7" fill="#e8321e"/>
<text x="4" y="134" font-size="5.5" fill="#ffe080" font-family="Liberation Sans" font-weight="bold" transform="scale(.8 1)" transform-origin="4 134">ULTIMORA GUERRA IN MEDIO ORIENTE</text>
<rect x="82" y="128" width="82" height="7" fill="#6a4a40"/><path d="M96 130 L120 131 L128 135 L96 135Z" fill="#e0e0e0"/>
<rect x="0" y="135" width="164" height="11.5" fill="#f8f8fa"/>
<rect x="0" y="146.5" width="164" height="14.5" fill="#142058"/>
</g>
</svg>
<div class="t" style="left:1044.50px;top:493.10px;font-family:'Liberation Sans';font-size:8.375px;font-weight:bold;font-style:normal;color:#1a2a60;transform:scaleX(0.5259);">PRIMO CAMION CON CARBURANTE ENTRA A GAZA DAL 7 OTTOBRE</div>
<div class="t" style="left:1044.50px;top:505.10px;font-family:'Liberation Sans';font-size:6.625px;font-weight:normal;font-style:normal;color:#e0e8ff;transform:scaleX(0.6924);">06:48 Oriente Rai News24 notizie l'informazione Esteri Italia Decreto Bollette</div>
</body></html>
